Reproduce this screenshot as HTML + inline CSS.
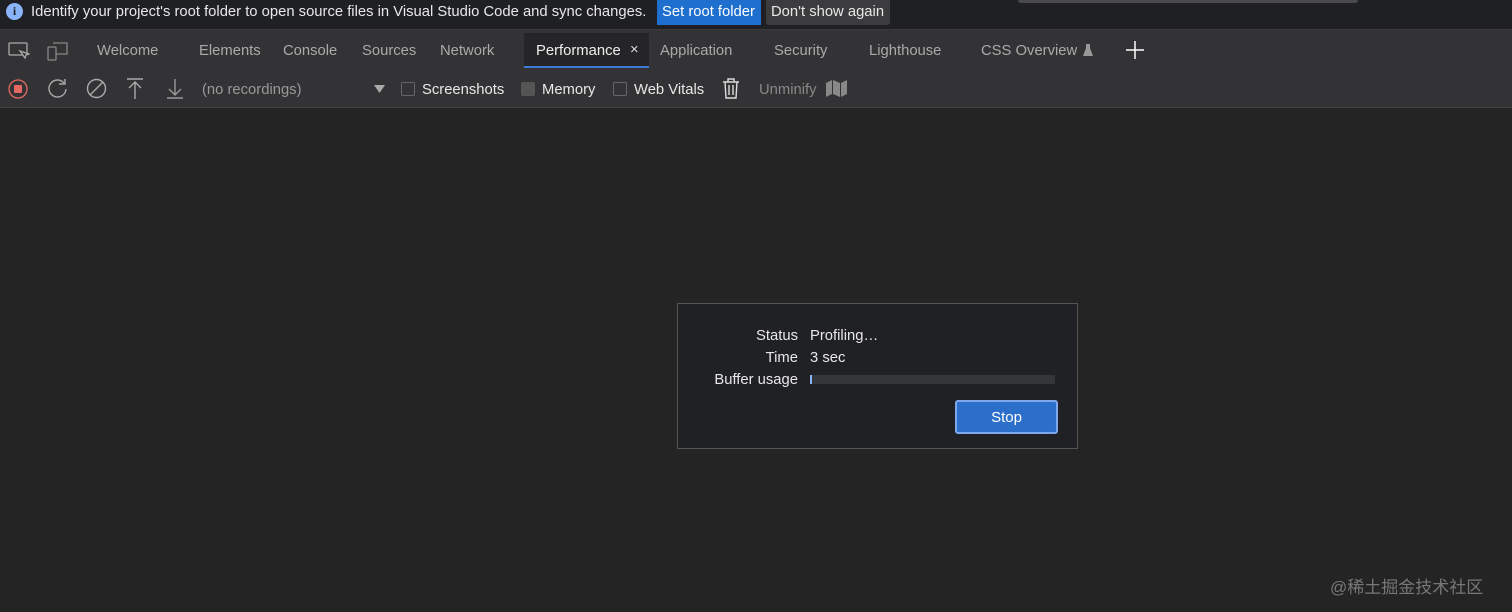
<!DOCTYPE html>
<html><head><style>
*{margin:0;padding:0;box-sizing:border-box}
body{width:1512px;height:612px;background:#242424;font-family:"Liberation Sans",sans-serif;overflow:hidden;position:relative;color:#ccc}
.top{position:absolute;left:0;top:0;width:1512px;height:30px;background:#1f2023;border-bottom:1px solid #3a3a3a}
.tb{position:absolute;left:0;top:30px;width:1512px;height:78px;background:#333335;border-bottom:1px solid #444}
.t{position:absolute;font-size:14.8px;white-space:nowrap;margin-top:1px}
.abs{position:absolute}
.cb{position:absolute;width:14px;height:14px;border:1px solid #666;border-radius:2px;top:82px}
</style></head><body>
<div class="top"></div>
<div class="abs" style="left:1018px;top:0;width:340px;height:3px;background:#4a4a4c;border-radius:0 0 3px 3px"></div>
<div class="abs" style="left:6px;top:3px;width:17px;height:17px;border-radius:50%;background:#8ab4f8;color:#1f2023;font-size:12px;font-weight:bold;text-align:center;line-height:17px;font-family:'Liberation Serif',serif">i</div>
<div class="t" style="left:31px;top:3px;color:#e8e8e8">Identify your project's root folder to open source files in Visual Studio Code and sync changes.</div>
<div class="abs" style="left:657px;top:0;width:104px;height:25px;background:#1f6fcf"></div>
<div class="t" style="left:662px;top:3px;color:#fff">Set root folder</div>
<div class="abs" style="left:766px;top:0;width:124px;height:25px;background:#3c3c3e;border-radius:0 0 3px 3px"></div>
<div class="t" style="left:771px;top:3px;color:#e8e8e8">Don't show again</div>

<div class="tb"></div>
<svg class="abs" style="left:8px;top:41px" width="22" height="20" viewBox="0 0 22 20" fill="none" stroke="#aaa" stroke-width="1.3"><rect x="1" y="2" width="18" height="12" rx="1"/><path d="M12 10l5 7 1-3 3-1z" fill="#333"/></svg>
<svg class="abs" style="left:47px;top:40px" width="22" height="22" viewBox="0 0 22 22" fill="none" stroke="#888" stroke-width="1.3"><rect x="1" y="7" width="8" height="13" rx="1"/><path d="M6 3h14v11h-11"/></svg>
<div class="t" style="left:97px;top:42px;color:#aaa">Welcome</div>
<div class="t" style="left:199px;top:42px;color:#aaa">Elements</div>
<div class="t" style="left:283px;top:42px;color:#aaa">Console</div>
<div class="t" style="left:362px;top:42px;color:#aaa">Sources</div>
<div class="t" style="left:440px;top:42px;color:#aaa">Network</div>
<div class="abs" style="left:524px;top:33px;width:125px;height:35px;background:#252527;border-bottom:2px solid #3d7bd6"></div>
<div class="t" style="left:536px;top:42px;color:#eee">Performance</div>
<div class="t" style="left:630px;top:41px;color:#ddd">×</div>
<div class="t" style="left:660px;top:42px;color:#aaa">Application</div>
<div class="t" style="left:774px;top:42px;color:#aaa">Security</div>
<div class="t" style="left:869px;top:42px;color:#aaa">Lighthouse</div>
<div class="t" style="left:981px;top:42px;color:#aaa">CSS Overview</div>
<svg class="abs" style="left:1082px;top:43px" width="12" height="14" viewBox="0 0 12 14"><path d="M4 1h4v4l3 8H1l3-8z" fill="#999"/></svg>
<svg class="abs" style="left:1125px;top:40px" width="20" height="20" viewBox="0 0 20 20" stroke="#fff" stroke-width="1.5"><path d="M10 1v18M1 10h18"/></svg>

<svg class="abs" style="left:8px;top:79px" width="20" height="20" viewBox="0 0 20 20"><circle cx="10" cy="10" r="9" fill="none" stroke="#e46962" stroke-width="1.3"/><rect x="6" y="6" width="8" height="8" rx="1" fill="#e46962"/></svg>
<svg class="abs" style="left:47px;top:78px" width="21" height="21" viewBox="0 0 21 21" fill="none" stroke="#aaa" stroke-width="1.4"><path d="M17 5A8.5 8.5 0 1 0 19 11"/><path d="M12 4h6V-1" transform="translate(0 2)"/></svg>
<svg class="abs" style="left:86px;top:78px" width="21" height="21" viewBox="0 0 21 21" fill="none" stroke="#aaa" stroke-width="1.4"><circle cx="10.5" cy="10.5" r="9"/><path d="M4 17L17 4"/></svg>
<svg class="abs" style="left:126px;top:78px" width="18" height="21" viewBox="0 0 18 21" fill="none" stroke="#aaa" stroke-width="1.4"><path d="M1 1h16M9 4v17M3 10l6-6 6 6"/></svg>
<svg class="abs" style="left:166px;top:78px" width="18" height="21" viewBox="0 0 18 21" fill="none" stroke="#999" stroke-width="1.4"><path d="M1 20h16M9 1v16M3 11l6 6 6-6"/></svg>
<div class="t" style="left:202px;top:81px;color:#999">(no recordings)</div>
<svg class="abs" style="left:374px;top:85px" width="11" height="8"><path d="M0 0h11L5.5 8z" fill="#aaa"/></svg>
<div class="cb" style="left:401px"></div>
<div class="t" style="left:422px;top:81px;color:#e8e8e8">Screenshots</div>
<div class="cb" style="left:521px;background:#555;border-color:#555"></div>
<div class="t" style="left:542px;top:81px;color:#e8e8e8">Memory</div>
<div class="cb" style="left:613px"></div>
<div class="t" style="left:634px;top:81px;color:#e8e8e8">Web Vitals</div>
<svg class="abs" style="left:722px;top:78px" width="18" height="21" viewBox="0 0 18 21" fill="none" stroke="#ddd" stroke-width="1.4"><path d="M1 4h16M6 4V1h6v3M3 4l1 16h10l1-16M7 7v10M11 7v10"/></svg>
<div class="t" style="left:759px;top:81px;color:#888">Unminify</div>
<svg class="abs" style="left:826px;top:80px" width="21" height="17" viewBox="0 0 21 17"><path d="M0 3l6-3v14l-6 3zM7 0l7 3v14l-7-3zM15 3l6-3v14l-6 3z" fill="#888"/></svg>

<div class="abs" style="left:677px;top:303px;width:401px;height:146px;background:#202124;border:1px solid #555"></div>
<div class="t" style="left:640px;width:158px;text-align:right;top:327px;color:#e8e8e8">Status</div>
<div class="t" style="left:640px;width:158px;text-align:right;top:349px;color:#e8e8e8">Time</div>
<div class="t" style="left:640px;width:158px;text-align:right;top:371px;color:#e8e8e8">Buffer usage</div>
<div class="t" style="left:810px;top:327px;color:#e8e8e8">Profiling…</div>
<div class="t" style="left:810px;top:349px;color:#e8e8e8">3 sec</div>
<div class="abs" style="left:810px;top:375px;width:245px;height:9px;background:#35363a"></div>
<div class="abs" style="left:810px;top:375px;width:2px;height:9px;background:#8ab4f8"></div>
<div class="abs" style="left:955px;top:400px;width:103px;height:34px;background:#2c6fcb;border:2px solid #7ea8ec;border-radius:3px;color:#fff;font-size:15px;text-align:center;line-height:31px">Stop</div>
<div class="t" style="left:1330px;top:572px;color:#777;font-size:17px;font-family:'Liberation Sans','Noto Sans CJK SC',sans-serif">@稀土掘金技术社区</div>
</body></html>
